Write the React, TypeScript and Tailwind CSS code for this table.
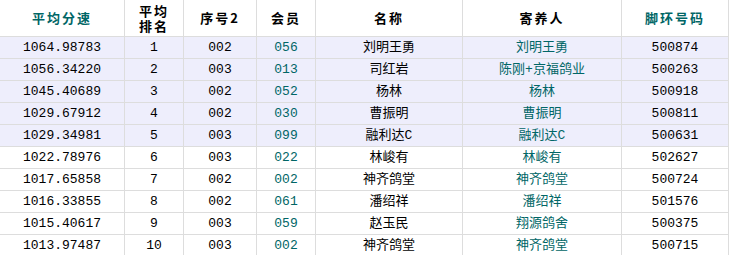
import React from "react"

type Row = {
  speed: string
  rank: number
  seq: string
  member: string
  name: string
  owner: string
  ring: string
}

const rows: Row[] = [
  { speed: "1064.98783", rank: 1, seq: "002", member: "056", name: "刘明王勇", owner: "刘明王勇", ring: "500874" },
  { speed: "1056.34220", rank: 2, seq: "003", member: "013", name: "司红岩", owner: "陈刚+京福鸽业", ring: "500263" },
  { speed: "1045.40689", rank: 3, seq: "002", member: "052", name: "杨林", owner: "杨林", ring: "500918" },
  { speed: "1029.67912", rank: 4, seq: "002", member: "030", name: "曹振明", owner: "曹振明", ring: "500811" },
  { speed: "1029.34981", rank: 5, seq: "003", member: "099", name: "融利达C", owner: "融利达C", ring: "500631" },
  { speed: "1022.78976", rank: 6, seq: "003", member: "022", name: "林峻有", owner: "林峻有", ring: "502627" },
  { speed: "1017.65858", rank: 7, seq: "002", member: "002", name: "神齐鸽堂", owner: "神齐鸽堂", ring: "500724" },
  { speed: "1016.33855", rank: 8, seq: "002", member: "061", name: "潘绍祥", owner: "潘绍祥", ring: "501576" },
  { speed: "1015.40617", rank: 9, seq: "003", member: "059", name: "赵玉民", owner: "翔源鸽舍", ring: "500375" },
  { speed: "1013.97487", rank: 10, seq: "003", member: "002", name: "神齐鸽堂", owner: "神齐鸽堂", ring: "500715" },
]

const cell = "flex items-center justify-center border-r border-b border-[#dddddd] text-center"
const head = "h-[37px] font-bold tracking-[2px] font-['Noto_Sans_CJK_SC']"

export default function App() {
  return (
    <div className="w-[730px] h-[255px] overflow-hidden bg-white">
      <div
        className="grid w-[729px] grid-cols-[125px_59px_73px_59px_147px_159px_107px] text-[13px] text-black"
        style={{ fontFamily: '"Liberation Mono", "Noto Sans CJK SC", monospace' }}
      >
        {/* header */}
        <div className={`${cell} ${head} text-[#006666]`}>平均分速</div>
        <div className={`${cell} ${head}`}>
          <p className="leading-[15px]">
            平均
            <br />
            排名
          </p>
        </div>
        <div className={`${cell} ${head} tracking-[1px]`}>序号2</div>
        <div className={`${cell} ${head}`}>会员</div>
        <div className={`${cell} ${head}`}>名称</div>
        <div className={`${cell} ${head}`}>寄养人</div>
        <div className={`${cell} ${head} text-[#006666]`}>脚环号码</div>

        {/* body */}
        {rows.map((r, i) => {
          const bg = i < 5 ? "bg-[#eeeefc]" : "bg-white"
          return (
            <React.Fragment key={i}>
              <div className={`${cell} ${bg} h-[22px]`}>{r.speed}</div>
              <div className={`${cell} ${bg} h-[22px]`}>{r.rank}</div>
              <div className={`${cell} ${bg} h-[22px]`}>{r.seq}</div>
              <div className={`${cell} ${bg} h-[22px] text-[#006666]`}>{r.member}</div>
              <div className={`${cell} ${bg} h-[22px]`}>{r.name}</div>
              <div className={`${cell} ${bg} h-[22px] text-[#006666]`}>{r.owner}</div>
              <div className={`${cell} ${bg} h-[22px]`}>{r.ring}</div>
            </React.Fragment>
          )
        })}
      </div>
    </div>
  )
}
